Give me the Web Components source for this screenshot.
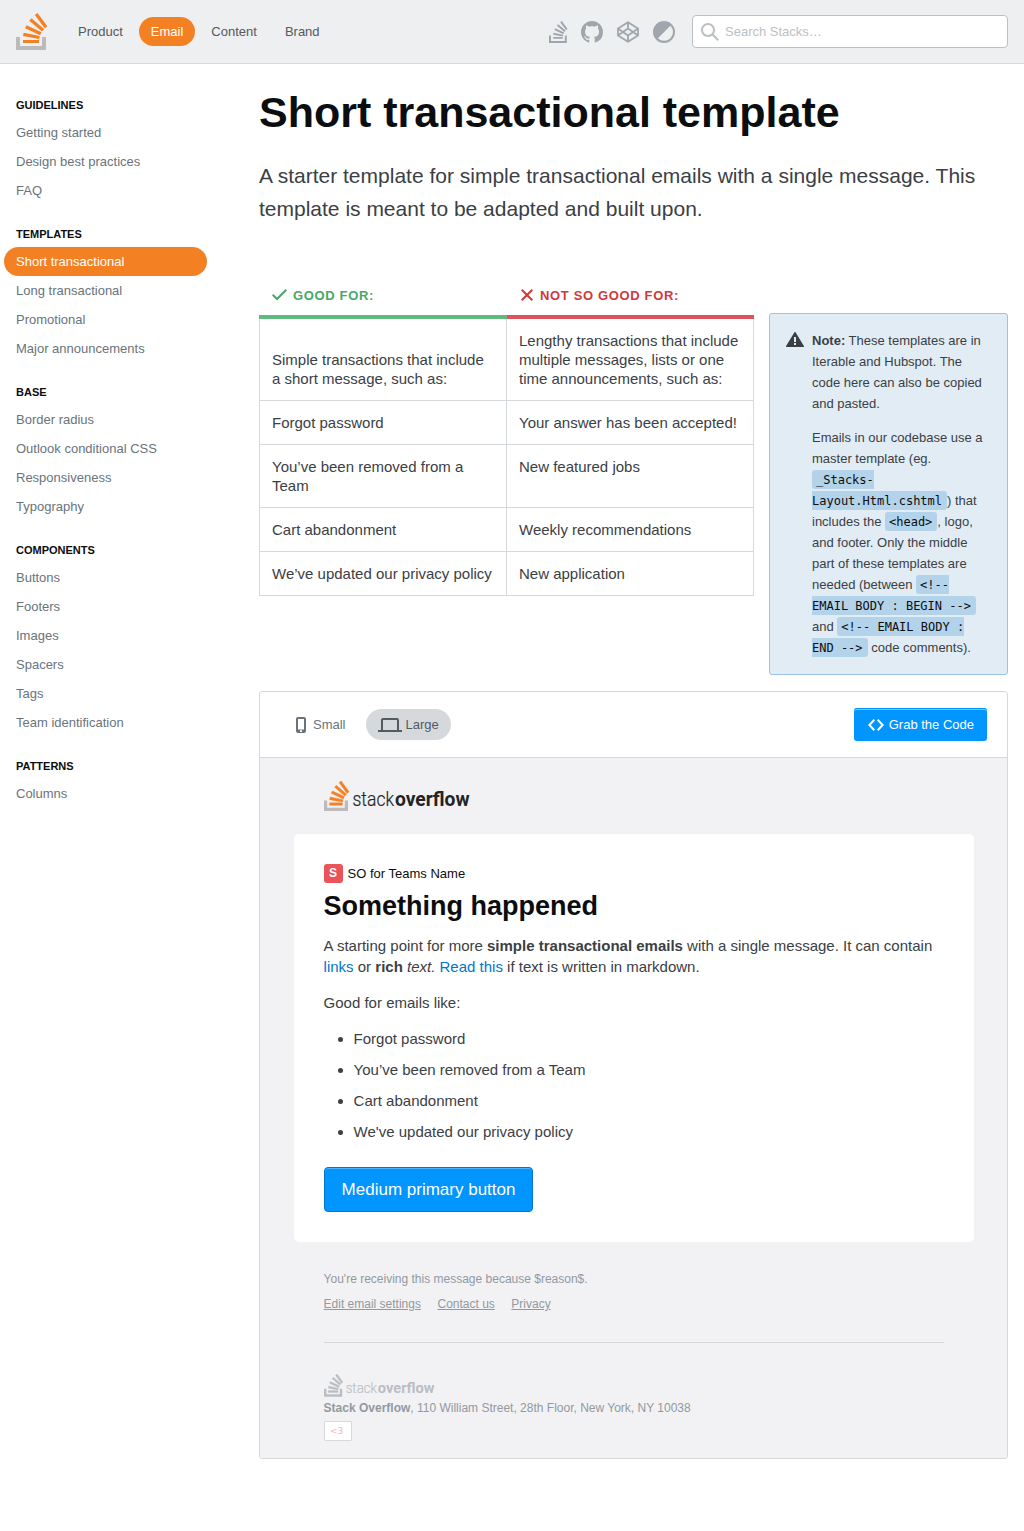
<!DOCTYPE html>
<html lang="en">
<head>
<meta charset="utf-8">
<title>Short transactional template</title>
<style>
  body { margin: 0; background: #fff; color: #3b4045; font: 13px/17px "Liberation Sans", Arial, sans-serif; }
</style>
</head>
<body>
<stacks-page></stacks-page>
<script>
const define = (name, html, setup) => customElements.define(name, class extends HTMLElement {
  constructor() {
    super();
    this.attachShadow({ mode: 'open' }).innerHTML = html;
  }
  connectedCallback() { if (setup) setup(this, this.shadowRoot); }
});

const ICONS = {
  glyph: ['0 0 32 37', '<path d="M26 33v-9h4v13H0V24h4v9h22z" fill="#bcbbbb"/><path d="M21.5 0l-2.7 2 9.9 13.3 2.7-2L21.5 0zM26 18.4L13.3 7.8l2.1-2.5 12.7 10.6-2.1 2.5zM9.1 15.2l15 7 1.4-3-15-7-1.4 3zm14 10.79l.68-2.95-16.1-3.35L7 23l16.1 2.99zM23 30H7v-3h16v3z" fill="#f48024"/>'],
  stack: ['0 0 32 37', '<path d="M26.7 33.6v-9H30V37H0V24.6h3.3v9h23.4z"/><path d="M21.5 0l-2.7 2 9.9 13.3 2.7-2L21.5 0zM26 18.4L13.3 7.8l2.1-2.5 12.7 10.6-2.1 2.5zM9.1 15.2l15 7 1.4-3-15-7-1.4 3zm14 10.79l.68-2.95-16.1-3.35L7 23l16.1 2.99zM23 30H7v-3h16v3z"/>'],
  github: ['0 0 16 16', '<path d="M8 0C3.58 0 0 3.58 0 8c0 3.54 2.29 6.53 5.47 7.59.4.07.55-.17.55-.38 0-.19-.01-.82-.01-1.49-2.01.37-2.53-.49-2.69-.94-.09-.23-.48-.94-.82-1.13-.28-.15-.68-.52-.01-.53.63-.01 1.08.58 1.23.82.72 1.21 1.87.87 2.33.66.07-.52.28-.87.51-1.07-1.78-.2-3.64-.89-3.64-3.95 0-.87.31-1.59.82-2.15-.08-.2-.36-1.02.08-2.12 0 0 .67-.21 2.2.82.64-.18 1.32-.27 2-.27.68 0 1.36.09 2 .27 1.53-1.04 2.2-.82 2.2-.82.44 1.1.16 1.92.08 2.12.51.56.82 1.27.82 2.15 0 3.07-1.87 3.75-3.65 3.95.29.25.54.73.54 1.48 0 1.07-.01 1.93-.01 2.2 0 .21.15.46.55.38A8.013 8.013 0 0016 8c0-4.42-3.58-8-8-8z"/>'],
  codepen: ['0 0 22 22', '<g fill="none" stroke="currentColor" stroke-width="1.8" stroke-linejoin="round"><path d="M11 1.2L21 7.6v6.8l-10 6.4L1 14.4V7.6z"/><path d="M1 7.6l10 6.8 10-6.8M1 14.4l10-6.8 10 6.8M11 1.2v6.4M11 14.4v6.4"/></g>'],
  contrast: ['0 0 22 22', '<path fill-rule="evenodd" d="M11 0a11 11 0 100 22 11 11 0 000-22zM17.4 4.7A8.6 8.6 0 014.9 17.2z"/>'],
  search: ['0 0 18 18', '<path d="M18 16.5l-5.14-5.18h-.35a7 7 0 10-1.19 1.19v.35L16.5 18l1.5-1.5zM12 7A5 5 0 112 7a5 5 0 0110 0z"/>'],
  check: ['0 0 18 18', '<path d="M16 4.41L14.59 3 6 11.59 2.41 8 1 9.41l5 5 10-10z"/>'],
  cross: ['0 0 18 18', '<path d="M15 4.41L13.59 3 9 7.59 4.41 3 3 4.41 7.59 9 3 13.59 4.41 15 9 10.41 13.59 15 15 13.59 10.41 9 15 4.41z"/>'],
  alert: ['0 0 18 16', '<path fill-rule="evenodd" d="M8.3.4c.4-.6 1-.6 1.400 0L17.900 14c.2.5.1 1-.5 1H.6c-.6 0-.7-.5-.5-1L8.300.4zM8 5v5h2V5H8zm0 6v2h2v-2H8z"/>'],
  phone: ['0 0 10 16', '<path fill-rule="evenodd" d="M2 0h6a2 2 0 012 2v12a2 2 0 01-2 2H2a2 2 0 01-2-2V2C0 .9.9 0 2 0zm0 2v10.500h6V2H2zm2 11.200v1.800h2v-1.800H4z"/>'],
  laptop: ['0 0 24 14', '<path fill-rule="evenodd" d="M5 0h14a2 2 0 012 2v10h3v2H0v-2h3V2C3 .9 3.900 0 5 0zm0 2v10h14V2H5z"/>'],
  code: ['0 0 16 12', '<path d="M5.600 0L7 1.400 2.800 6 7 10.600 5.600 12 0 6zM10.400 0L9 1.400 13.200 6 9 10.600l1.400 1.400L16 6z"/>']
};

define('s-icon', '<style>:host{display:inline-block;flex:none}svg{display:block;width:100%;height:100%;fill:currentColor}</style><div style="display:contents"></div>', (el, root) => {
  const [box, body] = ICONS[el.getAttribute('name')];
  el.style.width = el.getAttribute('w') + 'px';
  el.style.height = el.getAttribute('h') + 'px';
  root.querySelector('div').innerHTML = `<svg viewBox="${box}" aria-hidden="true">${body}</svg>`;
});

define('nav-pill', `<style>
  :host{display:block;padding:6px 12px;border-radius:1000px;color:#535a60}
  :host([active]){background:#f48024;color:#fff}
</style><slot></slot>`);

define('top-bar', `<style>
  :host{display:flex;box-sizing:border-box;height:64px;padding:0 16px;align-items:center;background:#eeeff1;border-bottom:1px solid #d6d9dc}
  nav{display:flex;gap:4px;margin-left:18px}
  .links{display:flex;align-items:center;gap:14px;margin-left:auto;color:#9fa6ad}
  .search{display:flex;align-items:center;box-sizing:border-box;width:316px;height:33px;margin-left:17px;padding:0 8px;gap:6px;background:#fff;border:1px solid #bbc0c4;border-radius:4px;color:#bbc0c4}
</style>
<s-icon name="glyph" w="32" h="37"></s-icon>
<nav><nav-pill>Product</nav-pill><nav-pill active>Email</nav-pill><nav-pill>Content</nav-pill><nav-pill>Brand</nav-pill></nav>
<div class="links"><s-icon name="stack" w="19" h="22" style="margin-right:-1px"></s-icon><s-icon name="github" w="22" h="22"></s-icon><s-icon name="codepen" w="22" h="22"></s-icon><s-icon name="contrast" w="22" h="22"></s-icon></div>
<div class="search"><s-icon name="search" w="18" h="18"></s-icon><span>Search Stacks…</span></div>`);

define('side-group', `<style>
  :host{display:block}
  h2{margin:0 0 6px;padding-left:12px;font-size:11px;line-height:14px;font-weight:bold;color:#0c0d0e;text-transform:uppercase}
</style><h2></h2><slot></slot>`, (el, root) => { root.querySelector('h2').textContent = el.getAttribute('label'); });

define('side-link', `<style>
  :host{display:block;padding:6px 12px;border-radius:1000px;color:#6a737c}
  :host([active]){background:#f48024;color:#fff}
</style><slot></slot>`);

define('side-bar', `<style>:host{display:flex;flex-direction:column;gap:22px;flex:none;width:203px;margin-left:4px;padding-top:34px}</style>
<side-group label="Guidelines"><side-link>Getting started</side-link><side-link>Design best practices</side-link><side-link>FAQ</side-link></side-group>
<side-group label="Templates"><side-link active>Short transactional</side-link><side-link>Long transactional</side-link><side-link>Promotional</side-link><side-link>Major announcements</side-link></side-group>
<side-group label="Base"><side-link>Border radius</side-link><side-link>Outlook conditional CSS</side-link><side-link>Responsiveness</side-link><side-link>Typography</side-link></side-group>
<side-group label="Components"><side-link>Buttons</side-link><side-link>Footers</side-link><side-link>Images</side-link><side-link>Spacers</side-link><side-link>Tags</side-link><side-link>Team identification</side-link></side-group>
<side-group label="Patterns"><side-link>Columns</side-link></side-group>`);

define('usage-table', `<style>
  :host{display:block;flex:none;width:495px}
  table{width:495px;border-collapse:separate;border-spacing:0;table-layout:fixed;font-size:15px;line-height:19px}
  col:first-child{width:248px}
  th{height:38px;padding:0 12px;text-align:left;font-size:13px;line-height:17px;letter-spacing:.65px;border-bottom:4px solid #5eba7d;color:#48a868}
  th+th{border-color:#de535e;color:#d1383d}
  th div{display:flex;align-items:center;gap:4px;margin-top:-2px}
  td{padding:12px;border:1px solid #d6d9dc;border-top:0;vertical-align:top}
  td+td{border-left:0}
  tr.intro td{vertical-align:bottom}
</style>
<table><colgroup><col><col></colgroup>
<thead><tr><th><div><s-icon name="check" w="18" h="18"></s-icon>GOOD FOR:</div></th><th><div><s-icon name="cross" w="18" h="18" style="margin-left:-1px"></s-icon>NOT SO GOOD FOR:</div></th></tr></thead>
<tbody>
<tr class="intro"><td>Simple transactions that include a short message, such as:</td><td>Lengthy transactions that include multiple messages, lists or one time announcements, such as:</td></tr>
<tr><td>Forgot password</td><td>Your answer has been accepted!</td></tr>
<tr><td>You’ve been removed from a Team</td><td>New featured jobs</td></tr>
<tr><td>Cart abandonment</td><td>Weekly recommendations</td></tr>
<tr><td>We’ve updated our privacy policy</td><td>New application</td></tr>
</tbody></table>`);

define('info-note', `<style>
  :host{display:flex;box-sizing:border-box;width:239px;height:362px;padding:16px;gap:8px;background:#e1ecf4;border:1px solid #9cc3e5;border-radius:3px;line-height:21px}
  s-icon{margin-top:2px}
  p{margin:0 0 13px}
  code{padding:3px 5px 2px 4px;background:#b3d3ea;border-radius:3px;color:#0c0d0e;font:12px/17px "DejaVu Sans Mono",monospace}
</style>
<s-icon name="alert" w="18" h="16"></s-icon>
<div><p><b>Note:</b> These templates are in Iterable and Hubspot. The code here can also be copied and pasted.</p>
<p>Emails in our codebase use a master template (eg. <code>_Stacks-<br>Layout.Html.cshtml</code>) that includes the <code>&lt;head&gt;</code>, logo, and footer. Only the middle part of these templates are needed (between <code>&lt;!--<br>EMAIL BODY : BEGIN --&gt;</code> and <code>&lt;!-- EMAIL BODY :<br>END --&gt;</code> code comments).</p></div>`);

define('word-mark', `<style>
  :host{display:block}
  svg{display:block;overflow:visible;font-family:Roboto,sans-serif}
</style><div></div>`, (el, root) => {
  const w = +el.getAttribute('w'), muted = el.hasAttribute('muted');
  const arc = muted ? '#babec3' : '#f48024', tray = muted ? '#babec3' : '#bcbbbb', ink = muted ? '#babec3' : '#222426';
  root.querySelector('div').innerHTML = `<svg width="${w}" height="${w * 30 / 145}" viewBox="0 0 145 30">
    <g transform="scale(.8 .81)"><path d="M26 33v-9h4v13H0V24h4v9h22z" fill="${tray}"/><path d="M21.500 0l-2.700 2 9.900 13.300 2.700-2L21.500 0zM26 18.400L13.300 7.800l2.100-2.500 12.700 10.600-2.100 2.500zM9.100 15.200l15 7 1.400-3-15-7-1.400 3zm14 10.790l.68-2.950-16.100-3.350L7 23l16.100 2.990zM23 30H7v-3h16v3z" fill="${arc}" stroke="${arc}" stroke-width=".5"/></g>
    <text x="28.500" y="24.800" font-size="19.500" font-weight="300" fill="${ink}" stroke="${ink}" stroke-width=".2" textLength="41.500" lengthAdjust="spacingAndGlyphs">stack</text>
    <text x="71" y="24.800" font-size="19.500" font-weight="700" fill="${ink}" textLength="74.500" lengthAdjust="spacingAndGlyphs">overflow</text></svg>`;
});

define('size-toggle', `<style>
  :host{display:flex;align-items:center;height:31px;padding:0 12px;border-radius:1000px;color:#6a737c}
  :host([active]){background:#d6d9dc;color:#535a60}
</style><slot></slot>`);

define('email-body', `<style>
  :host{display:block;padding:23px 33px 17px 34px;background:#f2f2f4}
  word-mark{margin-left:30px}
  .card{box-sizing:border-box;width:680px;height:408px;margin-top:23px;padding:30px 30px 30px 29.6px;background:#fff;border-radius:5px;font-size:15px;line-height:21px}
  .team{display:flex;align-items:center;gap:5px;height:19px;font-size:13px;color:#0c0d0e}
  .team b{width:19px;height:19px;border-radius:3px;background:#ea5458;color:#fff;font-size:12px;line-height:19px;text-align:center}
  h2{margin:7px 0 13px;font-size:27px;line-height:32px;color:#0c0d0e}
  p{margin:0 0 15px}
  a{color:#0077cc}
  ul{margin:0 0 25px;padding-left:30px}
  li{margin-bottom:10px}
  .cta{display:inline-block;box-sizing:border-box;height:45px;padding:0 17px;border:1px solid #0077cc;border-radius:4px;background:#0095ff;box-shadow:inset 0 1px 0 rgba(102,191,255,.75);color:#fff;font-size:17px;line-height:43px;white-space:nowrap}
  footer{margin:0 30px 0 29.6px;padding-top:29px;font-size:12px;line-height:17px;color:#9199a1}
  .links{display:flex;gap:16.500px;margin-top:8px;text-decoration:underline}
  .rule{height:1px;margin:29px 0 31px;background:#d6d8db}
  footer word-mark{margin:0 0 3px}
  .love{display:block;box-sizing:border-box;width:28px;height:20px;margin-top:4px;padding-right:2px;background:#fff;border:1px solid #d6d8db;border-radius:1px;color:#f4b4bb;font:9px/18px "DejaVu Sans",sans-serif;text-align:center}
</style>
<word-mark w="145"></word-mark>
<div class="card">
  <div class="team"><b>S</b>SO for Teams Name</div>
  <h2>Something happened</h2>
  <p>A starting point for more <b>simple transactional emails</b> with a single message. It can contain <a>links</a> or <b>rich</b> <i>text.</i> <a>Read this</a> if text is written in markdown.</p>
  <p>Good for emails like:</p>
  <ul><li>Forgot password</li><li>You’ve been removed from a Team</li><li>Cart abandonment</li><li>We've updated our privacy policy</li></ul>
  <span class="cta">Medium primary button</span>
</div>
<footer>
  <div>You're receiving this message because $reason$.</div>
  <div class="links"><span>Edit email settings</span><span>Contact us</span><span>Privacy</span></div>
  <div class="rule"></div>
  <word-mark w="110" muted></word-mark>
  <div><b>Stack Overflow</b>, 110 William Street, 28th Floor, New York, NY 10038</div>
  <span class="love">&lt;3</span>
</footer>`);

define('template-preview', `<style>
  :host{display:block;box-sizing:border-box;width:749px;height:768px;border:1px solid #d6d9dc;border-radius:3px;overflow:hidden}
  .bar{display:flex;align-items:center;height:65px;padding:0 20px 0 24px;gap:8px;border-bottom:1px solid #d6d9dc}
  .grab{display:flex;align-items:center;gap:5px;box-sizing:border-box;height:33px;margin-left:auto;padding:0 13px 0 14px;border-radius:3px;background:#0095ff;box-shadow:inset 0 1px 0 #0095ff,inset 0 2px 0 rgba(140,207,255,.8);color:#fff}
</style>
<div class="bar">
  <size-toggle><s-icon name="phone" w="10" h="16" style="margin-right:7px"></s-icon>Small</size-toggle>
  <size-toggle active><s-icon name="laptop" w="24" h="14" style="margin-right:4px"></s-icon>Large</size-toggle>
  <div class="grab"><s-icon name="code" w="16" h="12"></s-icon>Grab the Code</div>
</div>
<email-body></email-body>`);

define('stacks-page', `<style>
  :host{display:block;min-height:1531px}
  .cols{display:flex}
  main{width:749px;margin-left:52px;padding-top:23px}
  h1{margin:0;font-size:43px;line-height:50px;color:#0c0d0e}
  .lead{margin:22px 0 0;font-size:21px;line-height:33px}
  .row{display:flex;align-items:flex-start;justify-content:space-between;margin:52px 0 16px}
  info-note{margin-top:36px}
</style>
<top-bar></top-bar>
<div class="cols"><side-bar></side-bar>
<main><h1>Short transactional template</h1>
<p class="lead">A starter template for simple transactional emails with a single message. This template is meant to be adapted and built upon.</p>
<div class="row"><usage-table></usage-table><info-note></info-note></div>
<template-preview></template-preview></main></div>`);
</script>
</body>
</html>
